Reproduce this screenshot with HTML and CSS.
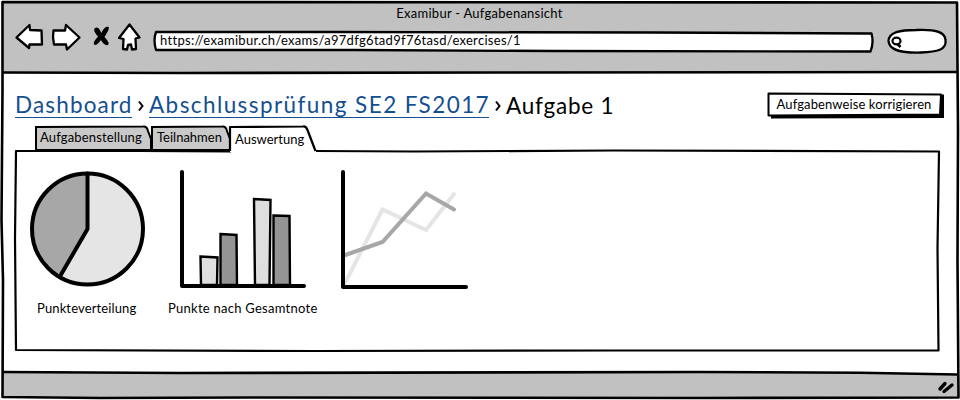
FILE: index.html
```html
<!DOCTYPE html>
<html lang="de">
<head>
<meta charset="utf-8">
<title>Examibur - Aufgabenansicht</title>
<link rel="stylesheet" href="styles.css">
</head>
<body>
<div class="browser">
  <svg class="sketch" viewBox="0 0 960 400" aria-hidden="true">
    <path class="chrome" d="M3 2H957V72H3Z M3 372L700 372L958 374V398H3Z"/>
    <path class="frame" d="M2.500 2L957 2.500L958 130L957.500 260L958.500 397.500L700 398L250 397.500L100 398L2.500 397L3 280L1.500 220L2.500 90Z"/>
    <path class="frame" d="M3 72.500L180 73L500 72.500L957 72"/>
    <path class="frame" d="M3 372L180 373L700 372L860 372.700L957 374.500"/>
  </svg>
  <header class="top">
    <h1 class="title"><span>Examibur - Aufgabenansicht</span></h1>
    <div class="toolbar">
      <svg class="nav" width="140" height="32" viewBox="0 0 140 32" aria-hidden="true">
        <path class="icon" d="M2.500 15.500L15.500 3L16 8L27.500 8.500L28 22.500L15.500 22.500L15 26Z"/>
        <path class="icon" d="M39.500 8.500L51 8.500L52 3L65.500 15.500L53 27.500L52 22.500L40 22.500L39 15Z"/>
        <path class="blade" d="M81 6C84 4 86 8 87.500 11C89 7 92 4 94.500 5C96 6 93 11 90.500 15C93 18 96 21 94 23C91 24 88 20 87 18C85 21 82 24 80 22.500C79 20 82 17 84 14.500C81 11 79 8 81 6Z"/>
        <path class="icon" d="M115.500 2.500L125.500 15.500L121.500 16.500L122 27L118 27.500L117 22.500L114 23L113 27.500L109 27L109.500 17L105 16Z"/>
      </svg>
      <div class="address">
        <svg class="sketch" viewBox="0 0 720 22" aria-hidden="true"><path class="shape" d="M2 2L180 2L500 2.500L717.500 3.500Q720 13 716.500 21.500L400 21L200 20L2 20Q-1 10 2 2Z"/></svg>
        <span class="url">https://examibur.ch/exams/a97dfg6tad9f76tasd/exercises/1</span>
      </div>
      <svg class="search" width="62" height="28" viewBox="0 0 62 28" aria-hidden="true">
        <path class="shape" d="M2.500 14C3 5 14 3 30 3C50 2 59 5 59.500 13C61 23 51 25 35 25.500C14 26 3 23 2.500 14Z"/>
        <ellipse class="lens" cx="10.500" cy="14" rx="4" ry="3.300"/><path class="frame" d="M11.500 17L14.500 20"/>
      </svg>
    </div>
  </header>
  <main class="page">
    <div class="heading">
      <nav class="crumbs"><a class="dash">Dashboard</a><svg width="6" height="12" viewBox="0 0 6 12" aria-hidden="true"><path class="chev" d="M1 1.500L4.500 6L1 10.500"/></svg><a class="exam">Abschlussprüfung SE2 FS2017</a><svg width="6" height="12" viewBox="0 0 6 12" aria-hidden="true"><path class="chev" d="M1 1.500L4.500 6L1 10.500"/></svg><span class="task">Aufgabe 1</span></nav>
      <button class="action">
        <svg class="sketch" viewBox="0 0 178 27" aria-hidden="true"><path d="M4 5H174V2.500H177V26L4 26.500Z"/><path class="shape thin" d="M1.500 1.500L90 2L174 2.500L173 22.500L1.500 23.500Z"/></svg>
        <span>Aufgabenweise korrigieren</span>
      </button>
    </div>
    <div class="tabs">
      <div class="tab t1"><svg class="sketch" viewBox="0 0 117 27" aria-hidden="true"><path class="tabshape" d="M1 25V2L108 1.500Q112 1 113 6L116 14V25Z"/></svg><span>Aufgabenstellung</span></div>
      <div class="tab t2"><svg class="sketch" viewBox="0 0 79 27" aria-hidden="true"><path class="tabshape" d="M1 25V2L71 1.500Q75 1 76 6L79 14V25Z"/></svg><span>Teilnahmen</span></div>
      <div class="tab t3"><svg class="sketch" viewBox="0 0 88 27" aria-hidden="true"><path class="tabfill" d="M1 27V2H77L86 27Z"/><path class="line" d="M1 26V2L74 1.500Q77 1 78.500 5L86.500 26"/></svg><span>Auswertung</span></div>
    </div>
    <section class="panel">
      <svg class="sketch" viewBox="0 0 926 204" aria-hidden="true"><path class="line" d="M217 3.500L124 3H2L1 90L2 202L300 203L600 202.500L924.500 202.500L923.500 100L925 3.500L600 2.500L400 3.500L302 3"/></svg>
      <figure class="f1">
        <svg width="118" height="120" viewBox="0 0 118 120" aria-hidden="true">
          <circle class="light" cx="59.500" cy="60" r="55.500"/>
          <path class="dark" d="M59.500 60V4.500A55.500 55.500 0 0 0 32.500 107.500Z"/>
          <circle class="axis" cx="59.500" cy="60" r="55.500"/><path class="axis" d="M59.500 4.500V60L32.500 106.500"/>
        </svg>
        <figcaption>Punkteverteilung</figcaption>
      </figure>
      <figure class="f2">
        <svg width="126" height="120" viewBox="0 0 126 120" aria-hidden="true">
          <path class="bar a" d="M20.500 87.500L37.500 88.500L37 116H21Z"/><path class="bar b" d="M40.500 65L56.500 66L57 116H40.500Z"/>
          <path class="bar a" d="M74 30L90.500 31L89.500 116H75Z"/><path class="bar b" d="M93.500 46.500L109.500 47L110 116H93.500Z"/>
          <path class="axis" d="M2 3V117H124"/>
        </svg>
        <figcaption>Punkte nach Gesamtnote</figcaption>
      </figure>
      <figure class="f3">
        <svg width="128" height="120" viewBox="0 0 128 120" aria-hidden="true">
          <path class="trend pale" d="M3 116L41.500 40.500L85 61L113 25"/>
          <path class="trend" d="M3 86.500L41.500 73L85 24.500L113 40.500"/>
          <path class="axis" d="M2 3V118H125"/>
        </svg>
      </figure>
    </section>
  </main>
  <footer class="bottom">
    <svg width="18" height="16" viewBox="0 0 18 16" aria-hidden="true"><path class="grip" d="M3 10L8 4.500M7 12.500L15 6"/></svg>
  </footer>
</div>
</body>
</html>
```
FILE: styles.css
```css
* { box-sizing: border-box; }
body {
  margin: 0;
  background: #fff;
  color: #000;
  font: 13px/16px Lato, "Open Sans", sans-serif;
}
svg { display: block; flex: none; }
span, a, figcaption { white-space: nowrap; }

.browser {
  position: relative;
  width: 960px;
  height: 400px;
  display: grid;
  grid-template-rows: 73px 1fr 28px;
}
.sketch {
  position: absolute;
  inset: 0;
  width: 100%;
  height: 100%;
  z-index: -1;
  overflow: visible;
}
.chrome { fill: #c1c1c1; }
.frame { fill: none; stroke: #000; stroke-width: 2.6; stroke-linejoin: round; }
.shape { fill: #fff; stroke: #000; stroke-width: 2.3; stroke-linejoin: round; }
.thin { stroke-width: 2; }
.line { fill: none; stroke: #000; stroke-width: 2.2; stroke-linejoin: round; }
.icon { fill: #fff; stroke: #000; stroke-width: 2.3; stroke-linejoin: round; }
.lens { fill: none; stroke: #000; stroke-width: 2.2; }
.chev { fill: none; stroke: #000; stroke-width: 2; }
.grip { stroke: #000; stroke-width: 3.4; stroke-linecap: round; }

.top { padding-top: 5px; }
.title { margin: 0; font: inherit; text-align: center; letter-spacing: 0.25px; text-indent: -1px; }
.toolbar { display: flex; align-items: flex-start; padding: 1px 0 0 14px; }
.address {
  position: relative;
  z-index: 0;
  width: 720px;
  height: 22px;
  margin: 8px 12px 0 0;
  padding: 2px 6px;
}
.url { letter-spacing: 0.3px; }
.search { margin-top: 5px; }

.page { padding: 19px 20px 0 14px; }
.heading { display: flex; justify-content: space-between; height: 33px; padding-left: 1px; }
.crumbs { display: flex; align-items: center; height: 27px; font-size: 22.5px; line-height: 24px; }
.crumbs svg { margin: 0 5px 0 6px; }
.crumbs a { color: #144f92; border-bottom: 1px solid #144f92; height: 25px; }
.dash { width: 117px; letter-spacing: 1.15px; }
.exam { width: 340px; letter-spacing: 1.42px; }
.task { letter-spacing: 0.75px; }
.action {
  position: relative;
  z-index: 0;
  width: 178px;
  height: 27px;
  margin-right: -5px;
  padding: 0 4px 4px 0;
  border: 0;
  background: none;
  color: #000;
  font: inherit;
  letter-spacing: 0.1px;
}

.tabs { display: flex; height: 23px; padding-left: 21px; }
.tab { position: relative; z-index: 1; height: 27px; padding: 4px 0 0 5px; }
.tab .sketch { z-index: -1; }
.tabshape { fill: #c9c9c9; stroke: #000; stroke-width: 2; }
.tabfill { fill: #fff; }
.t1 { width: 117px; letter-spacing: 0.15px; }
.t2 { width: 79px; margin-left: -1px; padding-left: 6px; }
.t3 { width: 88px; margin-left: -1px; padding-top: 6px; padding-left: 6px; }

.panel { position: relative; z-index: 0; display: flex; height: 204px; padding: 21px 0 0 14px; }
figure { margin: 0; }
.f1 { width: 138px; }
.f2 { width: 162px; }
.f2 svg { margin-left: 14px; }
.f3 { padding-left: 13px; }
figcaption { margin-top: 11px; }
.f1 figcaption { padding-left: 9px; letter-spacing: 0.13px; }
.f2 figcaption { padding-left: 2px; letter-spacing: 0.26px; }
.light { fill: #e5e5e5; }
.dark { fill: #a7a7a7; }
.axis { fill: none; stroke: #000; stroke-width: 4; stroke-linecap: round; stroke-linejoin: round; }
.bar { stroke: #000; stroke-width: 2.4; }
.a { fill: #dedede; }
.b { fill: #949494; }
.trend { fill: none; stroke: #a7a7a7; stroke-width: 4; stroke-linecap: round; }
.pale { stroke: #e5e5e5; }

.bottom { display: flex; justify-content: flex-end; padding: 7px 5px 0 0; }
```
